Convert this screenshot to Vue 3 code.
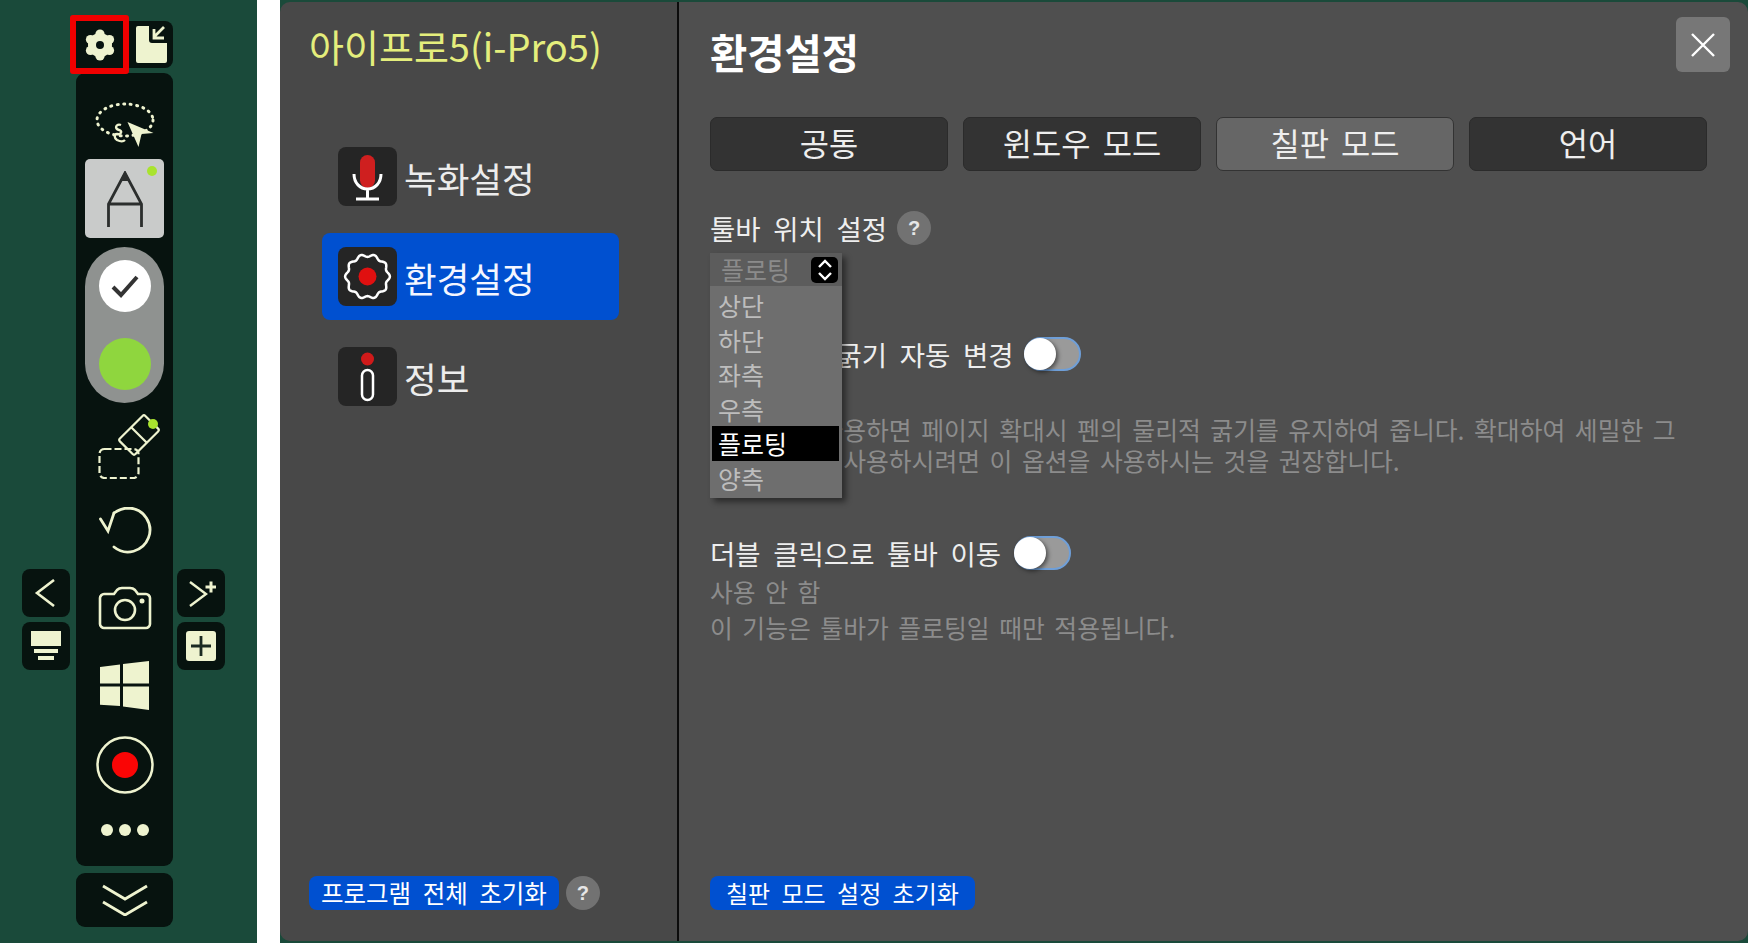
<script setup>
const options = [
  { label: '상단' },
  { label: '하단' },
  { label: '좌측' },
  { label: '우측' },
  { label: '플로팅', active: true },
  { label: '양측' },
]
const tabs = [
  { label: '공통' },
  { label: '윈도우 모드' },
  { label: '칠판 모드', active: true },
  { label: '언어' },
]

// wavy outline of the settings icon
function scallop(cx, cy, r, amp, lobes) {
  let d = ''
  for (let i = 0; i <= 180; i++) {
    const t = (i / 180) * Math.PI * 2
    const rr = r + amp * Math.cos(lobes * t)
    const x = cx + rr * Math.cos(t)
    const y = cy + rr * Math.sin(t)
    d += (i ? 'L' : 'M') + x.toFixed(2) + ' ' + y.toFixed(2)
  }
  return d + 'Z'
}
const navGear = scallop(29.5, 29.5, 21, 1.4, 10)

// six round lobes of the toolbar gear
const lobes = [0, 60, 120, 180, 240, 300].map((deg) => {
  const t = ((deg - 90) * Math.PI) / 180
  return { x: 16 + 11 * Math.cos(t), y: 16 + 11 * Math.sin(t) }
})
</script>

<template>
  <div class="page">
    <aside class="rail">
      <div class="top-row">
        <button class="gear-btn">
          <svg width="32" height="32" viewBox="0 0 32 32">
            <circle cx="16" cy="16" r="12" fill="#eef3cf"/>
            <circle v-for="(l, i) in lobes" :key="i" :cx="l.x" :cy="l.y" r="4.600" fill="#eef3cf"/>
            <circle cx="16" cy="16" r="4" fill="#07130f"/>
          </svg>
        </button>
        <button class="export-btn">
          <svg width="32" height="38" viewBox="0 0 32 38">
            <path fill="#eef3cf" d="M3 0H14V14a3 3 0 0 0 3 3H32V35a2 2 0 0 1-2 2H3a2 2 0 0 1-2-2V2a2 2 0 0 1 2-2Z"/>
            <path fill="none" stroke="#eef3cf" stroke-width="2.800" d="M29 1 19 11M19 3v9h10"/>
          </svg>
        </button>
      </div>

      <div class="rail-body">
        <div class="side side-left">
          <button class="side-btn">
            <svg width="24" height="28" viewBox="0 0 24 28"><path fill="none" stroke="#eef3cf" stroke-width="2.600" d="M20 1 3 14l17 13"/></svg>
          </button>
          <button class="side-btn">
            <svg width="30" height="30" viewBox="0 0 30 30">
              <rect y="0" width="30" height="15" fill="#eef3cf"/>
              <rect x="3" y="18" width="24" height="4" fill="#eef3cf"/>
              <rect x="7" y="25" width="16" height="4" fill="#eef3cf"/>
            </svg>
          </button>
        </div>

        <div class="toolbar-col">
          <div class="toolbar">
            <svg class="t-lasso" width="62" height="50" viewBox="0 0 62 50">
              <ellipse cx="31" cy="18" rx="28" ry="16" fill="none" stroke="#eef3cf" stroke-width="3" stroke-dasharray="1 5.500" stroke-linecap="round"/>
              <path fill="none" stroke="#eef3cf" stroke-width="2.400" d="M27 23c-5-2-7 4-2 5 4 1 2 5-2 4-3 0-3 4 0 6 4 2 7 1 8 0"/>
              <path fill="#eef3cf" d="M33.500 20 59.500 31 47.500 32 44.500 45Z"/>
            </svg>

            <button class="pen-btn">
              <span class="dot"></span>
              <svg class="pen-glyph" width="44" height="58" viewBox="0 0 44 58">
                <path fill="none" stroke="#2b2e2d" stroke-width="2.800" d="M5.500 56V33L22 2l16.500 31v23M5.500 33h33"/>
                <path fill="#2b2e2d" d="M22 0l5 10H17Z"/>
              </svg>
            </button>

            <div class="pill">
              <span class="swatch swatch-white">
                <svg width="30" height="24" viewBox="0 0 30 24"><path fill="none" stroke="#333" stroke-width="4" d="M3 13l8 8L27 3"/></svg>
              </span>
              <span class="swatch swatch-green"></span>
            </div>

            <svg class="t-eraser" width="66" height="66" viewBox="0 0 66 66">
              <g transform="rotate(-45 45 22)" fill="none" stroke="#eef3cf" stroke-width="2.200">
                <rect x="27" y="11" width="36" height="22" rx="2"/>
                <path d="M45 11v22"/>
              </g>
              <circle cx="59" cy="11" r="5" fill="#a9e32e"/>
              <rect x="5.500" y="36" width="39" height="29" rx="5" fill="none" stroke="#eef3cf" stroke-width="2.200" stroke-dasharray="7 3"/>
            </svg>

            <svg class="t-undo" width="54" height="48" viewBox="0 0 54 48">
              <path fill="none" stroke="#eef3cf" stroke-width="2.800" stroke-linecap="round" d="M15 6C19 3 25 1 30 1a22 22 0 1 1-15 39"/>
              <path fill="none" stroke="#eef3cf" stroke-width="2.800" stroke-linecap="round" d="M1.500 12 9 24 15 6"/>
            </svg>

            <svg class="t-camera" width="54" height="44" viewBox="0 0 54 44">
              <path fill="none" stroke="#eef3cf" stroke-width="2.600" d="M6 8h10l3-4c1-1 3-2 5-2h8c2 0 4 1 5 2l3 4h8c2 0 4 2 4 4v26c0 2-2 4-4 4H6c-2 0-4-2-4-4V12c0-2 2-4 4-4Z"/>
              <circle cx="27" cy="24" r="10" fill="none" stroke="#eef3cf" stroke-width="2.600"/>
              <circle cx="44" cy="15" r="2.500" fill="#eef3cf"/>
            </svg>

            <svg class="t-win" width="50" height="50" viewBox="0 0 50 50">
              <path fill="#eef3cf" d="M0 6 20 3.500V22.500H0ZM23 3 49 0V22.500H23ZM0 25.500H20V45L0 43.700ZM23 25.500H49V49L23 45.500Z"/>
            </svg>

            <svg class="t-rec" width="58" height="58" viewBox="0 0 58 58">
              <circle cx="29" cy="29" r="27.500" fill="none" stroke="#eef3cf" stroke-width="2.500"/>
              <circle cx="29" cy="29" r="13" fill="#fa0505"/>
            </svg>

            <div class="t-dots"><i></i><i></i><i></i></div>
          </div>

          <button class="collapse-btn">
            <svg width="48" height="32" viewBox="0 0 48 32">
              <path fill="none" stroke="#eef3cf" stroke-width="2.800" d="M2 2l22 13L46 2M2 18l22 13 22-13"/>
            </svg>
          </button>
        </div>

        <div class="side side-right">
          <button class="side-btn">
            <svg width="30" height="30" viewBox="0 0 30 30">
              <path fill="none" stroke="#eef3cf" stroke-width="2.400" d="M4 4l16 12L4 28"/>
              <path fill="none" stroke="#eef3cf" stroke-width="3" d="M25 3.500v11M19.500 9h11"/>
            </svg>
          </button>
          <button class="side-btn">
            <svg width="30" height="30" viewBox="0 0 30 30">
              <rect width="30" height="30" rx="3" fill="#eef3cf"/>
              <path stroke="#1a2a22" stroke-width="2.800" d="M15 5v20M5 15h20"/>
            </svg>
          </button>
        </div>
      </div>
    </aside>

    <div class="stage">
      <div class="dialog">
        <section class="left-pane">
          <h1 class="app-title">아이프로5(i-Pro5)</h1>
          <nav class="nav">
            <a class="nav-item">
              <span class="nav-icon">
                <svg width="59" height="59" viewBox="0 0 59 59">
                  <rect x="22" y="8" width="15" height="33" rx="7.500" fill="#cf1f1f"/>
                  <path fill="none" stroke="#fff" stroke-width="3" d="M16 27c0 9 6 15 13.500 15S43 36 43 27M29.500 42v9M18 52h23"/>
                </svg>
              </span>
              <span class="nav-label">녹화설정</span>
            </a>
            <a class="nav-item active">
              <span class="nav-icon">
                <svg width="59" height="59" viewBox="0 0 59 59">
                  <path :d="navGear" fill="none" stroke="#fff" stroke-width="2.500"/>
                  <circle cx="29.500" cy="29.500" r="9" fill="#e01010"/>
                </svg>
              </span>
              <span class="nav-label">환경설정</span>
            </a>
            <a class="nav-item">
              <span class="nav-icon">
                <svg width="59" height="59" viewBox="0 0 59 59">
                  <circle cx="29.500" cy="12" r="6.500" fill="#d01a1a"/>
                  <rect x="24" y="23" width="11" height="30" rx="5.500" fill="none" stroke="#fff" stroke-width="2.500"/>
                </svg>
              </span>
              <span class="nav-label">정보</span>
            </a>
          </nav>
          <div class="pane-foot">
            <button class="reset-btn">프로그램 전체 초기화</button>
            <span class="help">?</span>
          </div>
        </section>

        <section class="right-pane">
          <header class="pane-head">
            <h2>환경설정</h2>
            <button class="close-btn">
              <svg width="26" height="26" viewBox="0 0 26 26"><path stroke="#fff" stroke-width="2.400" d="M2 2l22 22M24 2 2 24"/></svg>
            </button>
          </header>

          <div class="tabs">
            <button v-for="t in tabs" :key="t.label" class="tab" :class="{ active: t.active }">{{ t.label }}</button>
          </div>

          <div class="field-pos">
            <div class="label-row">
              <span class="label">툴바 위치 설정</span>
              <span class="help">?</span>
            </div>
            <div class="select-wrap">
              <div class="select-head">
                <span>플로팅</span>
                <span class="select-arrow">
                  <svg width="16" height="22" viewBox="0 0 16 22"><path fill="none" stroke="#fff" stroke-width="2.400" d="M2 8l6-6 6 6M2 14l6 6 6-6"/></svg>
                </span>
              </div>
              <ul class="select-menu">
                <li v-for="o in options" :key="o.label" :class="{ active: o.active }">{{ o.label }}</li>
              </ul>
            </div>
          </div>

          <div class="label-row row-pen">
            <span class="label">확대시 펜 굵기 자동 변경</span>
            <span class="toggle"><i></i></span>
          </div>
          <p class="desc desc-pen">이 기능을 사용하면 페이지 확대시 펜의 물리적 굵기를 유지하여 줍니다. 확대하여 세밀한 그<br>림을 그릴때 사용하시려면 이 옵션을 사용하시는 것을 권장합니다.</p>

          <div class="label-row row-move">
            <span class="label">더블 클릭으로 툴바 이동</span>
            <span class="toggle"><i></i></span>
          </div>
          <p class="desc desc-move">사용 안 함<br>이 기능은 툴바가 플로팅일 때만 적용됩니다.</p>

          <div class="pane-foot">
            <button class="reset-btn">칠판 모드 설정 초기화</button>
          </div>
        </section>
      </div>
    </div>
  </div>
</template>

<style>
html, body { margin: 0; background: #fff; }
</style>

<style scoped>
.page {
  display: flex;
  width: 1748px;
  height: 943px;
  overflow: hidden;
  font-family: "Noto Sans CJK KR", "Noto Sans", sans-serif;
  background: #fff;
}
button { font-family: inherit; border: 0; padding: 0; cursor: pointer; }
h1, h2, p, ul { margin: 0; padding: 0; }

/* left floating toolbar */
.rail {
  width: 257px;
  height: 943px;
  flex: none;
  background: #1a4a3a;
  box-sizing: border-box;
  padding-top: 15px;
}
.top-row { display: flex; align-items: center; margin-left: 70px; height: 59px; position: relative; z-index: 1; }
.gear-btn {
  width: 59px;
  height: 59px;
  box-sizing: border-box;
  border: 6px solid #f00000;
  border-radius: 3px;
  background: #07130f;
  display: flex;
  align-items: center;
  justify-content: center;
}
.export-btn {
  width: 44px;
  height: 47px;
  background: #07130f;
  border-radius: 0 8px 8px 0;
  display: flex;
  align-items: center;
  justify-content: center;
}
.rail-body { display: flex; margin-left: 22px; margin-top: -1px; }
.side { display: flex; flex-direction: column; gap: 5px; margin-top: 496px; }
.side-left { margin-right: 6px; }
.side-right { margin-left: 4px; }
.side-btn {
  width: 48px;
  height: 48px;
  background: #07130f;
  border-radius: 8px;
  display: flex;
  align-items: center;
  justify-content: center;
}
.toolbar-col { width: 97px; }
.toolbar {
  height: 793px;
  background: #07130f;
  border-radius: 9px;
  display: flex;
  flex-direction: column;
  align-items: center;
}
.t-lasso { margin-top: 29px; }
.pen-btn {
  position: relative;
  width: 79px;
  height: 79px;
  flex: none;
  margin-top: 7px;
  background: #c9cbca;
  border-radius: 5px;
  display: flex;
  align-items: center;
  justify-content: center;
}
.pen-glyph { margin-top: 3px; }
.dot {
  position: absolute;
  top: 7px;
  right: 7px;
  width: 10px;
  height: 10px;
  border-radius: 50%;
  background: #a9e32e;
}
.pill {
  width: 79px;
  height: 156px;
  flex: none;
  margin-top: 9px;
  border-radius: 40px;
  background: #8f9290;
  display: flex;
  flex-direction: column;
  align-items: center;
  gap: 26px;
  padding-top: 13px;
  box-sizing: border-box;
}
.swatch {
  width: 52px;
  height: 52px;
  flex: none;
  border-radius: 50%;
  display: flex;
  align-items: center;
  justify-content: center;
}
.swatch-white { background: #fff; }
.swatch-green { background: #8fd63e; }
.t-eraser { margin-top: 10px; margin-left: 4px; }
.t-undo { margin-top: 28px; margin-left: 3px; }
.t-camera { margin-top: 31px; margin-left: 1px; }
.t-win { margin-top: 31px; }
.t-rec { margin-top: 25px; margin-left: 1px; }
.t-dots { display: flex; gap: 6px; margin-top: 30px; }
.t-dots i { width: 12px; height: 12px; border-radius: 50%; background: #eef3cf; }
.collapse-btn {
  width: 97px;
  height: 54px;
  margin-top: 7px;
  background: #07130f;
  border-radius: 9px;
  display: flex;
  align-items: center;
  justify-content: center;
}

/* settings dialog */
.stage {
  flex: none;
  width: 1468px;
  margin-left: 23px;
  height: 943px;
  box-sizing: border-box;
  padding: 2px 0;
  background: #1a4a3a;
}
.dialog {
  display: flex;
  height: 939px;
  border-radius: 10px;
  overflow: hidden;
}
.left-pane {
  width: 397px;
  flex: none;
  box-sizing: border-box;
  background: #484848;
  display: flex;
  flex-direction: column;
  padding-left: 29px;
  padding-bottom: 31px;
}
.app-title {
  font-size: 38px;
  font-weight: 400;
  line-height: 50px;
  margin-top: 19px;
  color: #e4ee7c;
  white-space: nowrap;
}
.nav { display: flex; flex-direction: column; gap: 13px; margin-left: 13px; margin-top: 62px; }
.nav-item {
  display: flex;
  align-items: center;
  gap: 7px;
  width: 297px;
  height: 87px;
  box-sizing: border-box;
  padding-left: 16px;
  border-radius: 8px;
  font-size: 35.500px;
  color: #ececec;
}
.nav-item.active { background: #0050d0; color: #f4f6ff; }
.nav-label { padding-top: 2px; }
.nav-icon {
  width: 59px;
  height: 59px;
  flex: none;
  background: #252525;
  border-radius: 8px;
  display: flex;
}
.pane-foot { margin-top: auto; display: flex; align-items: center; gap: 7px; }
.reset-btn {
  height: 34px;
  padding: 0 12px;
  background: #0050d0;
  color: #fff;
  border-radius: 8px;
  font-size: 24.500px;
  line-height: 34px;
  word-spacing: 6px;
  white-space: nowrap;
}
.help {
  width: 34px;
  height: 34px;
  flex: none;
  border-radius: 50%;
  background: #727272;
  color: #e6e6e6;
  font: 700 20px/34px "Liberation Sans", sans-serif;
  text-align: center;
}

.right-pane {
  position: relative;
  flex: 1;
  min-width: 0;
  border-left: 2px solid #0c0c0c;
  background: #4f4f4f;
  display: flex;
  flex-direction: column;
  padding-left: 31px;
  padding-bottom: 31px;
}
.pane-head { display: flex; justify-content: space-between; align-items: flex-start; padding-right: 18px; padding-top: 15px; }
.pane-head h2 { font-size: 40.500px; font-weight: 700; line-height: 54px; margin-top: 8px; color: #fff; }
.close-btn {
  width: 54px;
  height: 55px;
  background: #777;
  border-radius: 6px;
  display: flex;
  align-items: center;
  justify-content: center;
}
.tabs { display: flex; gap: 15px; margin-top: 38px; }
.tab {
  width: 238px;
  height: 54px;
  padding-bottom: 4px;
  background: #333;
  border: 1px solid #2b2b2b;
  box-sizing: border-box;
  border-radius: 7px;
  color: #eee;
  font-size: 31.800px;
  line-height: 48px;
  word-spacing: 5px;
}
.tab.active { background: #666; border-color: #333; }

.field-pos { position: relative; margin-top: 40px; }
.label-row { display: flex; align-items: center; gap: 10px; height: 34px; }
.label { font-size: 27.500px; line-height: 34px; color: #eee; word-spacing: 6.500px; white-space: nowrap; }
.select-wrap {
  position: absolute;
  z-index: 2;
  left: 0;
  top: 42px;
  width: 132px;
  box-shadow: 4px 4px 6px rgba(0, 0, 0, 0.45);
}
.select-head {
  height: 33px;
  background: #5c5c5c;
  color: #8b8b8b;
  font-size: 25px;
  line-height: 33px;
  padding-left: 11px;
  display: flex;
  align-items: center;
  justify-content: space-between;
  padding-right: 4px;
}
.select-arrow {
  width: 27px;
  height: 26px;
  background: #000;
  border-radius: 5px;
  display: flex;
  align-items: center;
  justify-content: center;
}
.select-menu {
  list-style: none;
  background: #6e6e6e;
  padding: 2px 3px 3px 2px;
}
.select-menu li {
  height: 34.500px;
  line-height: 34.500px;
  font-size: 25px;
  color: #bdbdbd;
  padding-left: 6px;
}
.select-menu li.active { background: #000; color: #fff; }

.toggle {
  position: relative;
  display: block;
  width: 57px;
  height: 34px;
  flex: none;
  box-sizing: border-box;
  border: 2px solid #6f9fd8;
  border-radius: 17px;
  background: #9a9a9a;
}
.toggle i {
  position: absolute;
  left: -2px;
  top: -1px;
  width: 32px;
  height: 32px;
  border-radius: 50%;
  background: #fff;
  box-shadow: 2px 2px 4px rgba(0, 0, 0, 0.5);
}
.row-pen { margin-top: 92px; }
.row-move { margin-top: 60px; gap: 13px; }
.desc { font-size: 24.800px; line-height: 31px; color: #8c8c8c; word-spacing: 4px; white-space: nowrap; }
.desc-pen { margin-top: 43px; }
.desc-move { margin-top: 3px; line-height: 36px; }
.right-pane .pane-foot { margin-top: auto; }
.right-pane .reset-btn { padding: 0 16px; font-size: 24px; }
</style>
